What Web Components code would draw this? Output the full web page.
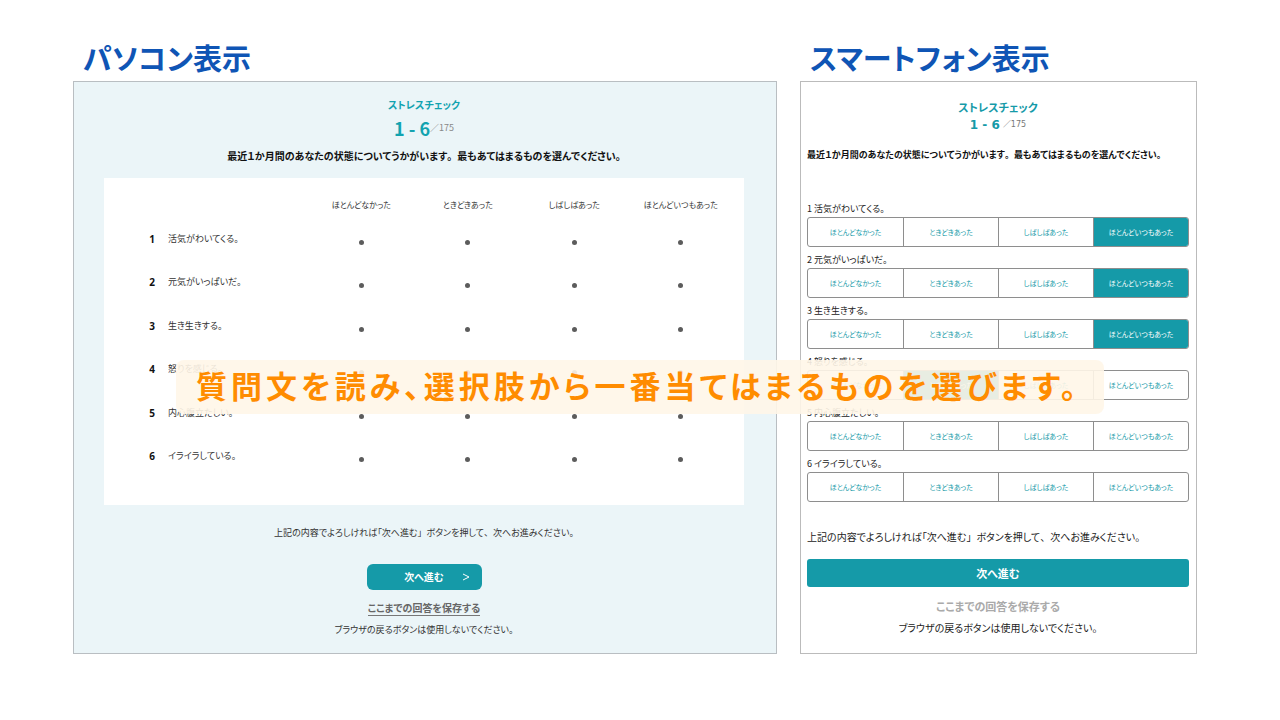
<!DOCTYPE html>
<html lang="ja">
<head>
<meta charset="utf-8">
<meta name="viewport" content="width=device-width, initial-scale=1">
<title>ストレスチェック 画面例</title>
<style>
  body {
    margin: 0;
    background: #fff;
    color: #333;
    font-family: "Noto Sans CJK JP", "Noto Sans", sans-serif;
    font-feature-settings: "palt";
  }
</style>
</head>
<body>
<stress-guide>
  <screen-example label="パソコン表示">
    <pc-survey></pc-survey>
  </screen-example>
  <screen-example label="スマートフォン表示">
    <phone-survey></phone-survey>
  </screen-example>
  <guide-caption slot="caption">質問文を読み、選択肢から一番当てはまるものを選びます。</guide-caption>
</stress-guide>

<script>
const QUESTIONS = ["活気がわいてくる。", "元気がいっぱいだ。", "生き生きする。", "怒りを感じる。", "内心腹立たしい。", "イライラしている。"];
const CHOICES = ["ほとんどなかった", "ときどきあった", "しばしばあった", "ほとんどいつもあった"];
const PHONE_ANSWERS = [3, 3, 3, 1, -1, -1];

// Punctuation inside a sentence keeps its full-width space.
const FULL_STYLE = `i { font-style: normal; font-feature-settings: normal; }`;
const sentence = text => text.replace(/[」、。](?=.)/g, "<i>$&</i>");
const LEAD = sentence("最近１か月間のあなたの状態についてうかがいます。最もあてはまるものを選んでください。");
const CONFIRM = sentence("上記の内容でよろしければ「次へ進む」ボタンを押して、次へお進みください。");

function define(name, render) {
  customElements.define(name, class extends HTMLElement {
    constructor() {
      super();
      this.attachShadow({ mode: "open" });
    }
    connectedCallback() {
      this.shadowRoot.innerHTML = render(this);
    }
  });
}

define("stress-guide", () => `
  <style>
    :host { display: block; }
    main {
      position: relative;
      display: grid;
      grid-template-columns: minmax(0, 704fr) minmax(0, 397fr);
      gap: 23px;
      padding: 33px 83px 66px 73px;
    }
    ::slotted([slot="caption"]) {
      position: absolute;
      top: 360px;
      left: 13.75%;
      right: 13.75%;
    }
  </style>
  <main><slot></slot><slot name="caption"></slot></main>`);

define("guide-caption", () => `
  <style>
    :host {
      display: block;
      box-sizing: border-box;
      padding: 0 20px 4px;
      border-radius: 8px;
      background: rgba(255, 246, 232, .9);
      color: #ff8c00;
      font-size: 31px;
      font-weight: 700;
      line-height: 50px;
      letter-spacing: 4px;
      white-space: nowrap;
    }
  </style>
  <slot></slot>`);

define("screen-example", el => `
  <style>
    :host { display: flex; flex-direction: column; }
    h2 {
      margin: 0;
      padding-left: 10px;
      color: #0f55b5;
      font-size: 29px;
      font-weight: 700;
      line-height: 48px;
      white-space: nowrap;
    }
    ::slotted(*) { flex: 1; }
  </style>
  <h2>${el.getAttribute("label")}</h2>
  <slot></slot>`);

define("pc-survey", () => `
  <style>
    :host {
      display: flex;
      flex-direction: column;
      align-items: center;
      box-sizing: border-box;
      padding: 13px 32px 15px 30px;
      border: 1px solid #b9bec2;
      background: #ebf5f8;
      font-size: 9px;
      line-height: 16px;
      white-space: nowrap;
    }
    ${FULL_STYLE}
    h3, p { margin: 0; }
    h3 { color: #12a3b0; font-size: 10px; line-height: 20px; }
    .count { display: flex; align-items: center; height: 26px; color: #888; }
    .count b { color: #12a3b0; font-size: 18px; }
    .lead { margin-top: 7px; color: #111; font-size: 10px; font-weight: 700; }
    .card {
      box-sizing: border-box;
      width: 100%;
      margin: 14px 0 20px;
      padding: 8px 10px 27px 40px;
      background: #fff;
    }
    table { width: 100%; height: 292px; table-layout: fixed; border-collapse: collapse; }
    th, td { padding: 0; }
    thead th { height: 25px; padding-top: 6px; font-size: 8px; font-weight: 400; }
    .no { width: 16px; color: #111; font-family: "Noto Sans", sans-serif; font-size: 10px; font-weight: 700; text-align: center; }
    .question { padding-left: 8px; font-weight: 400; text-align: left; }
    .question-col { width: 148px; }
    td { text-align: center; }
    input {
      appearance: none;
      display: block;
      width: 5px;
      height: 5px;
      margin: 7px auto 0;
      border-radius: 50%;
      background: #5c5c5c;
    }
    button {
      display: grid;
      grid-template-columns: 1fr auto 1fr;
      align-items: center;
      width: 115px;
      height: 26px;
      margin: 23px 0 10px;
      padding: 0 12px;
      border: 0;
      border-radius: 6px;
      background: #159aa8;
      color: #fff;
      font: inherit;
      font-size: 10px;
      font-weight: 700;
    }
    button span { grid-column: 2; }
    svg { justify-self: end; width: 8px; height: 8px; fill: none; stroke: #fff; }
    a { border-bottom: 1px solid #777; color: #666; font-size: 10px; font-weight: 700; line-height: 15px; text-decoration: none; }
    .note { margin-top: 6px; }
  </style>
  <h3>ストレスチェック</h3>
  <p class="count"><b>1 - 6</b><span>／175</span></p>
  <p class="lead">${LEAD}</p>
  <div class="card">
    <table>
      <colgroup><col class="no"><col class="question-col"><col span="4"></colgroup>
      <thead><tr><td></td><td></td>${CHOICES.map(c => `<th scope="col">${c}</th>`).join("")}</tr></thead>
      <tbody>${QUESTIONS.map((q, i) => `
        <tr><td class="no">${i + 1}</td><th class="question" scope="row">${q}</th>${CHOICES.map(c =>
          `<td><input type="radio" name="q${i}" aria-label="${q} ${c}"></td>`).join("")}</tr>`).join("")}
      </tbody>
    </table>
  </div>
  <p>${CONFIRM}</p>
  <button type="button"><span>次へ進む</span><svg viewBox="0 0 8 8" aria-hidden="true"><path d="M1 1 7 4 1 7"/></svg></button>
  <a href="#save">ここまでの回答を保存する</a>
  <p class="note">ブラウザの戻るボタンは使用しないでください。</p>`);

define("phone-survey", () => `
  <style>
    :host {
      display: flex;
      flex-direction: column;
      box-sizing: border-box;
      padding: 16px 7px 15px 6px;
      border: 1px solid #bbb;
      background: #fff;
      color: #222;
      font-size: 10px;
      line-height: 16px;
      text-align: center;
      white-space: nowrap;
    }
    ${FULL_STYLE}
    h3, p { margin: 0; }
    h3 { color: #159aa8; font-size: 11px; line-height: 18px; }
    .count {
      display: flex;
      align-items: center;
      justify-content: center;
      gap: 3px;
      height: 18px;
      color: #777;
      font-family: "DejaVu Sans", "Noto Sans CJK JP", sans-serif;
      font-size: 8px;
    }
    .count b { color: #159aa8; font-size: 12px; }
    .lead { margin: 13px 0 38px; color: #111; font-size: 9px; font-weight: 700; text-align: left; }
    fieldset { min-width: 0; margin: 0 0 5px; padding: 0; border: 0; }
    legend { padding: 0; font-size: 9px; text-align: left; }
    .choices {
      display: grid;
      grid-template-columns: repeat(4, 1fr);
      box-sizing: border-box;
      height: 30px;
      overflow: hidden;
      border: 1px solid #8e8e8e;
      border-radius: 3px;
    }
    label {
      position: relative;
      border-left: 1px solid #8e8e8e;
      color: #159aa8;
      font-size: 7px;
      line-height: 28px;
    }
    label:first-child { border-left: 0; }
    label:has(:checked) { background: #159aa8; color: #fff; }
    input { appearance: none; position: absolute; inset: 0; margin: 0; }
    .confirm { margin: 22px 0 14px; text-align: left; }
    button {
      height: 28px;
      padding: 0;
      border: 0;
      border-radius: 3px;
      background: #159aa8;
      color: #fff;
      font: inherit;
      font-size: 11px;
      font-weight: 700;
    }
    a { align-self: center; margin: 11px 0 6px; color: #aaa; font-size: 11px; font-weight: 700; text-decoration: none; }
  </style>
  <h3>ストレスチェック</h3>
  <p class="count"><b>1 - 6</b><span>／175</span></p>
  <p class="lead">${LEAD}</p>
  ${QUESTIONS.map((q, i) => `
  <fieldset>
    <legend>${i + 1} ${q}</legend>
    <div class="choices">${CHOICES.map((c, j) =>
      `<label><input type="radio" name="p${i}"${PHONE_ANSWERS[i] === j ? " checked" : ""}>${c}</label>`).join("")}</div>
  </fieldset>`).join("")}
  <p class="confirm">${CONFIRM}</p>
  <button type="button">次へ進む</button>
  <a href="#save">ここまでの回答を保存する</a>
  <p>ブラウザの戻るボタンは使用しないでください。</p>`);
</script>
</body>
</html>
